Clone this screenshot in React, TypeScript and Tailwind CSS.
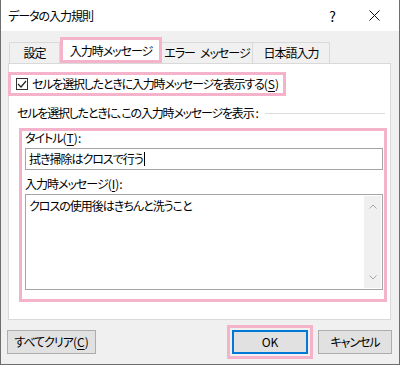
import React from 'react';

const PINK = 'border-[#f4b3ca]';

function Key({ k }: { k: string }) {
  return (
    <span className="tracking-normal">
      (<span className="underline underline-offset-2">{k}</span>)
    </span>
  );
}

export default function App() {
  return (
    <div className="w-[400px] h-[365px] bg-[#f0f0f0] border-l border-r border-b border-[#6e6e6e] flex flex-col text-[12px] tracking-[-1px] whitespace-nowrap text-black font-['Noto_Sans_CJK_JP',sans-serif] [font-feature-settings:'palt'] leading-none select-none overflow-hidden">
      {/* タイトルバー */}
      <div className="h-[31px] bg-white flex items-center pl-[7px] shrink-0">
        <span className="flex-1">データの入力規則</span>
        <span className="text-[14px] mr-[34px]">?</span>
        <svg width="11" height="11" viewBox="0 0 11 11" className="mr-[19px]">
          <path d="M0.5 0.5 L10.5 10.5 M10.5 0.5 L0.5 10.5" stroke="#111" strokeWidth="1" />
        </svg>
      </div>

      {/* タブ */}
      <div className="flex items-end pl-[8px] mt-[6px] h-[26px] shrink-0">
        <div className="w-[51px] h-[21px] border border-b-0 border-[#d9d9d9] flex items-center justify-center">設定</div>
        <div className={`w-[102px] h-[26px] border-[3px] ${PINK} bg-white flex items-center justify-center pt-[1px]`}>入力時メッセージ</div>
        <div className="w-[91px] h-[21px] border border-b-0 border-l-0 border-[#d9d9d9] flex items-center justify-center">
          エラー<span className="ml-[5px]">メッセージ</span>
        </div>
        <div className="w-[77px] h-[21px] border border-b-0 border-l-0 border-[#d9d9d9] flex items-center justify-center">日本語入力</div>
      </div>

      {/* パネル */}
      <div className="ml-[7px] w-[383px] h-[257px] bg-white border border-[#d9d9d9] flex flex-col shrink-0">
        <div className={`-ml-[1px] mt-[8px] w-[278px] h-[24px] border-[3px] ${PINK} flex items-center pl-[5px] gap-[4px]`}>
          <div className="w-[12px] h-[12px] border border-[#333] bg-white flex items-center justify-center">
            <svg width="10" height="10" viewBox="0 0 10 10">
              <path d="M1 5 L4 8 L9 2" fill="none" stroke="#222" strokeWidth="1.2" />
            </svg>
          </div>
          <span className="tracking-[-1.2px]">セルを選択したときに入力時メッセージを表示する<Key k="S" /></span>
        </div>

        <div className="mt-[8px] h-[18px] flex items-center pl-[8px] pr-[5px]">
          <span className="tracking-[-1.2px]">セルを選択したときに、この入力時メッセージを表示</span>
          <span className="tracking-normal ml-[2px]">:</span>
          <div className="flex-1 h-px bg-[#dcdcdc] ml-[6px]" />
        </div>

        <div className={`ml-[10px] mt-[6px] w-[368px] h-[174px] border-[3px] ${PINK} flex flex-col pl-[3px]`}>
          <div className="h-[14px] flex items-center">タイトル<Key k="T" /><span className="tracking-normal">:</span></div>
          <div className="mt-[3px] w-[358px] h-[22px] border border-[#a5a5a5] flex items-center pl-[3px]">
            <span>拭き掃除はクロスで行う</span>
            <span className="w-px h-[14px] bg-black ml-[1px]" />
          </div>
          <div className="mt-[7px] h-[14px] flex items-center">入力時メッセージ<Key k="I" /><span className="tracking-normal">:</span></div>
          <div className="mt-[3px] w-[358px] h-[96px] border border-[#a5a5a5] flex">
            <div className="flex-1 pl-[3px] pt-[5px]">クロスの使用後はきちんと洗うこと</div>
            <div className="w-[17px] my-[1px] mr-[1px] bg-[#f0f0f0] flex flex-col items-center justify-between py-[8px]">
              <svg width="8" height="5" viewBox="0 0 8 5">
                <path d="M0.5 4.5 L4 1 L7.5 4.5" fill="none" stroke="#a6a6a6" strokeWidth="1" />
              </svg>
              <svg width="8" height="5" viewBox="0 0 8 5">
                <path d="M0.5 0.5 L4 4 L7.5 0.5" fill="none" stroke="#a6a6a6" strokeWidth="1" />
              </svg>
            </div>
          </div>
        </div>
      </div>

      {/* ボタン */}
      <div className="mt-[5px] h-[34px] flex items-center pl-[6px] pr-[7px] shrink-0">
        <button className="w-[89px] h-[24px] bg-[#e1e1e1] border border-[#adadad] flex items-center justify-center">
          すべてクリア<Key k="C" />
        </button>
        <div className="flex-1" />
        <div className={`border-[3px] ${PINK} p-[2px]`}>
          <button className="w-[76px] h-[24px] bg-[#e1e1e1] border-2 border-[#0078d7] flex items-center justify-center tracking-normal">OK</button>
        </div>
        <button className="ml-[5px] w-[74px] h-[24px] bg-[#e1e1e1] border border-[#adadad] flex items-center justify-center">キャンセル</button>
      </div>
    </div>
  );
}
